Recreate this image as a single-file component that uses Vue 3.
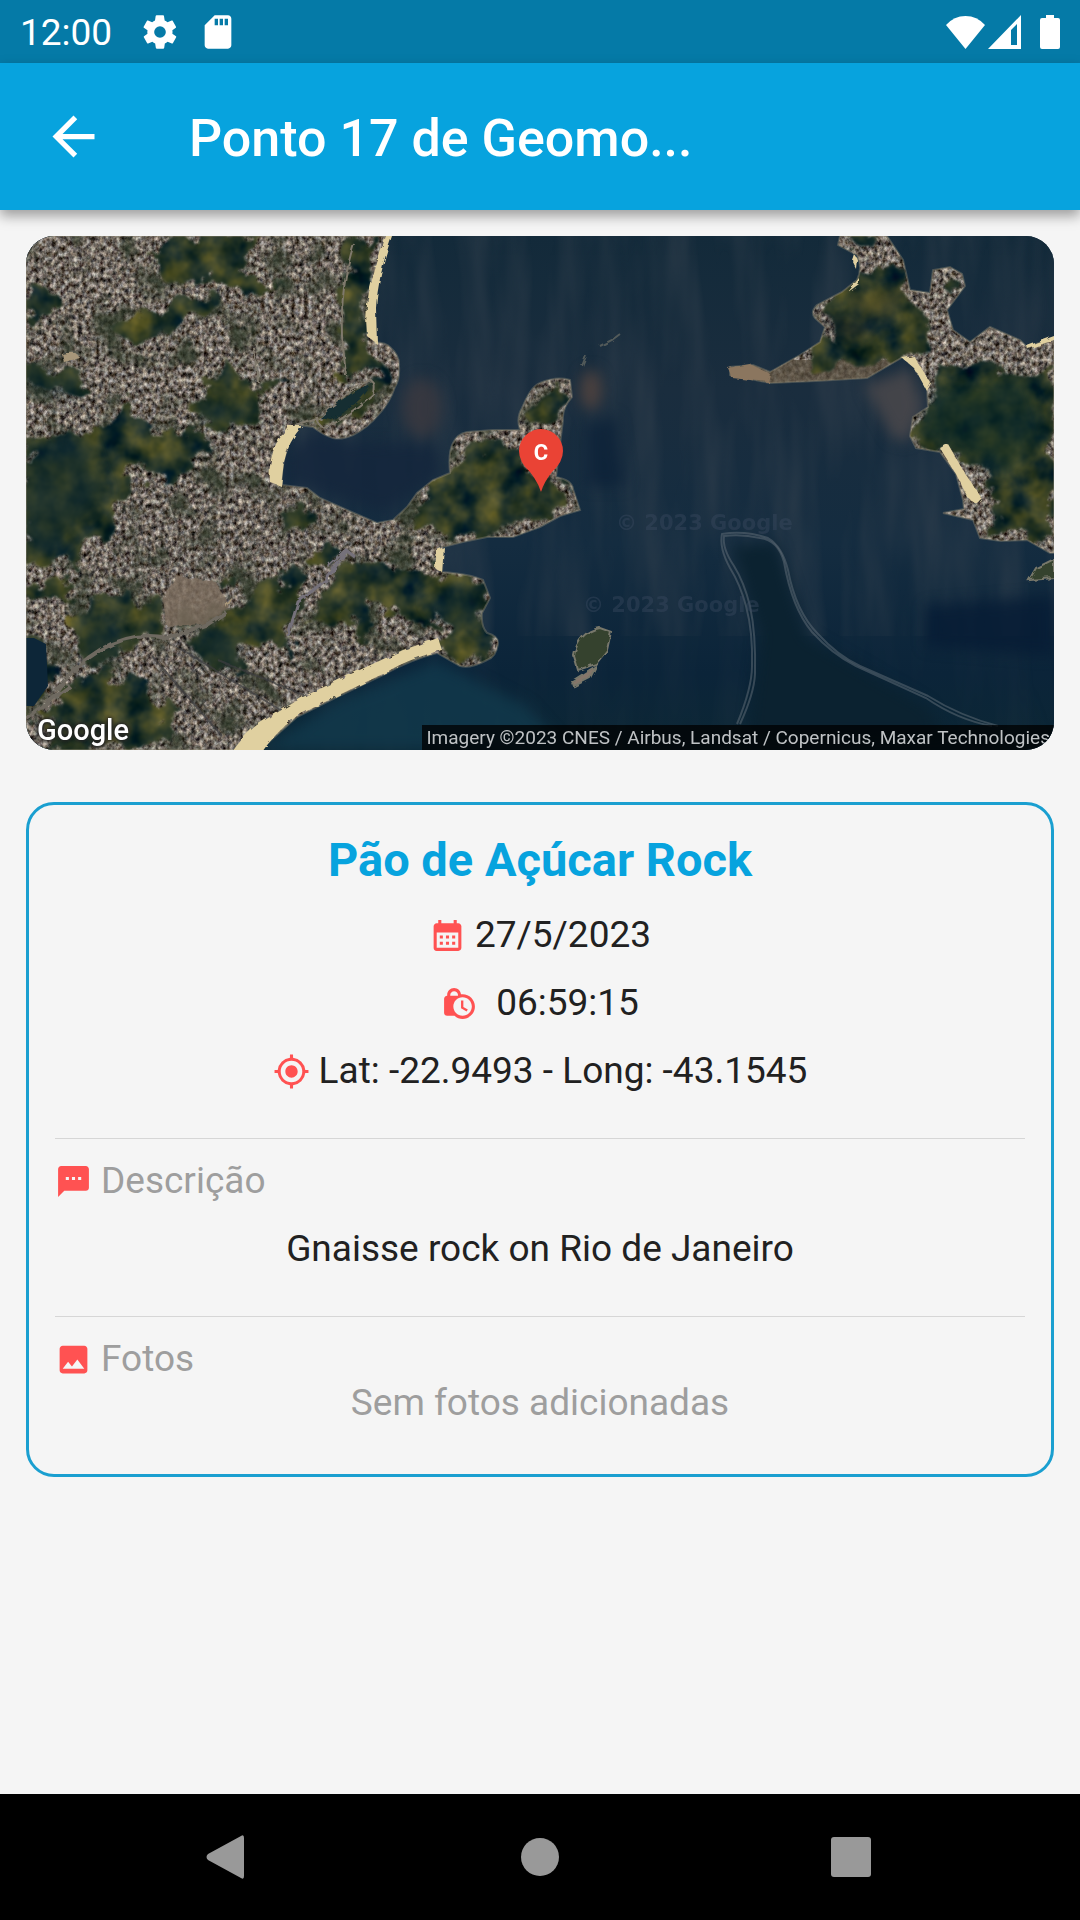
<script setup>
const point = {
  screenTitle: 'Ponto 17 de Geomo...',
  name: 'Pão de Açúcar Rock',
  date: '27/5/2023',
  time: '06:59:15',
  lat: '-22.9493',
  long: '-43.1545',
  description: 'Gnaisse rock on Rio de Janeiro',
}

const mainland =
  'M0 0H364Q356 22 352 37Q346 60 347 71L348 106Q361 107 364 111Q374 120 373 130Q374 143 369 151Q364 166 354 177Q342 192 327 199Q316 204 307 202Q297 199 287 191L272 189Q263 199 261 214Q255 230 256 249L281 252L294 262L321 274L351 287L367 284L381 271L391 257L407 244L424 237Q422 216 427 207Q431 198 441 196L467 194L494 194Q490 182 496 172Q505 150 514 147Q530 140 544 144L546 161Q536 172 537 184L530 241Q546 244 547 253L554 274L534 280L514 291L487 301L461 301L437 306L417 311L416 336Q444 338 457 344L464 362L456 377Q455 391 461 397Q473 400 472 408Q470 421 461 424Q444 433 434 430L411 417Q384 424 361 437L311 461L271 481L234 514H0Z'

const niteroi =
  'M814 0L812 9L831 19Q837 32 831 44L816 56L791 69Q784 76 789 82L799 91L794 106L774 119L744 136L727 129L704 131V139L744 147L790 145L841 142L877 121L893 130L901 151L902 171L887 181L884 200L890 212L914 216L930 238L937 264L938 273L917 277L947 284L954 302L975 305L1001 304L1024 317H1028V102L1001 111L994 104L964 91L944 106L927 94L921 74L939 50L936 38L924 31L907 34L904 57L884 54L877 24L861 0Z'

// wooded hills between the neighbourhoods
const hills = [
  'M128 8Q180 -8 242 0L212 28Q214 44 260 50Q220 60 190 44Q160 52 128 36Z',
  'M92 88Q140 66 182 62Q196 58 184 76L128 104Q100 112 82 96Z',
  'M318 0H350Q340 30 338 60L336 100L352 122Q360 140 350 160L322 186Q304 194 296 180Q340 160 346 138Q330 132 318 142L314 60Z',
  'M0 58Q20 48 36 60L18 84L0 90Z',
  'M0 128Q40 126 66 154L30 160L0 148Z',
  'M168 164Q190 142 202 120L216 138Q222 158 240 146L266 142L230 158Q240 182 214 190Q174 192 168 164Z',
  'M0 208Q34 194 60 198L102 158Q112 166 106 190Q134 206 162 190L182 196Q170 222 160 236L130 258Q120 232 110 222Q102 256 96 282L66 308L50 330L0 328Z',
  'M0 350L40 340Q54 348 44 360L0 360Z',
  'M58 370Q100 356 136 366L140 394Q110 408 90 424L64 430Q44 416 58 370Z',
  'M188 340L206 336L208 350L190 354Z',
  'M160 404Q184 392 198 374Q230 356 250 344L270 338Q288 360 266 392L258 420L244 404L220 412L214 434Q188 440 160 404Z',
  'M298 360L322 330Q370 324 414 336L452 346L460 362L452 376Q454 396 466 404Q468 416 456 422L414 414L424 394Q412 384 390 382L340 366L336 402L318 376L286 382Z',
  'M252 278Q278 270 288 274L276 292L262 302Q252 290 252 278Z',
  'M284 316Q302 306 310 314L302 330L288 326Z',
  'M0 404Q18 404 22 424L20 456Q10 480 0 484Z',
  'M44 450Q80 424 90 440Q132 454 152 476Q150 500 130 514H20Q34 490 20 476Z',
  'M384 274Q400 248 430 240Q450 200 470 206Q490 210 496 230L540 250L548 272L512 286L460 298L430 302Q410 298 396 288Z',
  'M500 172Q508 152 536 148L540 160Q530 172 530 182L506 186Z',
]

const eastHills = [
  'M822 50Q836 34 846 26L872 34L880 58L902 82Q910 100 890 116L850 130L790 134Q776 124 800 104L802 88L794 76Z',
  'M906 132Q950 120 990 136Q1020 138 1028 130V300L1000 296L960 296L962 282L975 262L952 240L936 214L892 204L896 184L908 172Z',
  'M818 0H850L842 16L824 12Z',
  'M914 44L930 40L932 52L920 66Z',
]
</script>

<template>
  <div class="screen">
    <div class="status-bar">
      <span class="clock">12:00</span>
      <svg class="status-icon" viewBox="0 0 24 24" aria-hidden="true">
        <path
          d="M19.4 13c.1-.3.1-.6.1-1s0-.7-.1-1l2.100-1.600c.2-.2.2-.4.100-.6l-2-3.500c-.1-.2-.4-.3-.6-.2l-2.500 1c-.5-.4-1.100-.7-1.700-1l-.4-2.600c0-.3-.2-.5-.5-.5h-4c-.2 0-.4.2-.5.4l-.4 2.700c-.6.2-1.100.600-1.700 1l-2.500-1c-.2-.1-.5 0-.6.2l-2 3.500c-.1.2-.1.500.1.600L4.500 11c0 .3-.1.600-.1 1s0 .7.100 1l-2.100 1.600c-.2.2-.2.4-.100.600l2 3.500c.1.2.4.3.6.2l2.500-1c.5.4 1.100.7 1.700 1l.4 2.600c0 .3.200.500.500.500h4c.2 0 .5-.2.500-.4l.4-2.700c.6-.2 1.100-.6 1.700-1l2.500 1c.2.1.500 0 .6-.2l2-3.500c.1-.2.100-.5-.1-.6zM12 15.500a3.500 3.500 0 1 1 0-7 3.500 3.500 0 0 1 0 7z"
        />
      </svg>
      <svg class="status-icon" viewBox="0 0 24 24" aria-hidden="true">
        <path
          d="M18 2h-8L4 8v12c0 1.100.9 2 2 2h12c1.100 0 2-.9 2-2V4c0-1.100-.9-2-2-2zm-6 6h-2V4h2v4zm3 0h-2V4h2v4zm3 0h-2V4h2v4z"
        />
      </svg>
      <div class="status-right">
        <svg class="wifi" viewBox="0 0 39 34" aria-hidden="true">
          <path d="M0 10Q8 1 19.500 1T39 10L19.500 34Z" />
        </svg>
        <svg class="signal" viewBox="0 0 33 34" aria-hidden="true">
          <path d="M33 0V34H0ZM29 9L23 15V30H29Z" fill-rule="evenodd" />
        </svg>
        <svg class="battery" viewBox="0 0 20 34" aria-hidden="true">
          <path d="M6 0h8v3h4q2 0 2 2v27q0 2-2 2H2q-2 0-2-2V5q0-2 2-2h4z" />
        </svg>
      </div>
    </div>

    <header class="app-bar">
      <button class="back-btn" type="button" aria-label="Voltar">
        <svg viewBox="0 0 24 24" aria-hidden="true">
          <path
            d="M20 11H7.830l5.590-5.590L12 4l-8 8 8 8 1.410-1.410L7.830 13H20v-2z"
          />
        </svg>
      </button>
      <h1>{{ point.screenTitle }}</h1>
    </header>

    <main class="content">
      <div class="map">
        <svg
          class="map-image"
          viewBox="0 0 1028 514"
          preserveAspectRatio="xMidYMid slice"
          aria-hidden="true"
        >
          <defs>
            <linearGradient id="sea" x1="0" y1="0" x2="0" y2="1">
              <stop offset="0" stop-color="#132a3a" />
              <stop offset="0.3" stop-color="#1a2d3e" />
              <stop offset="0.6" stop-color="#142c40" />
              <stop offset="0.85" stop-color="#0b2439" />
              <stop offset="1" stop-color="#0c2735" />
            </linearGradient>
            <clipPath id="land-clip"><path :d="mainland" /></clipPath>
            <clipPath id="east-clip"><path :d="niteroi" /></clipPath>
            <filter
              id="streaks"
              x="0"
              y="0"
              width="100%"
              height="100%"
              color-interpolation-filters="sRGB"
            >
              <feTurbulence
                type="fractalNoise"
                baseFrequency="0.03 0.005"
                numOctaves="3"
                seed="6"
              />
              <feColorMatrix
                values="0 0 0 0 0.21  0 0 0 0 0.26  0 0 0 0 0.31  1.6 0 0 0 -0.6"
              />
            </filter>
            <filter
              id="blocks"
              x="0"
              y="0"
              width="100%"
              height="100%"
              color-interpolation-filters="sRGB"
            >
              <feTurbulence
                type="fractalNoise"
                baseFrequency="0.23 0.19"
                numOctaves="3"
                seed="11"
              />
              <feColorMatrix
                values="1.1 0.15 0 0 -0.19  1.1 0.05 0 0 -0.17  1.05 0 0.1 0 -0.2  0 0 0 0 1"
              />
            </filter>
            <!-- trees and shadow scattered through the city -->
            <filter
              id="scatter"
              x="0"
              y="0"
              width="100%"
              height="100%"
              color-interpolation-filters="sRGB"
            >
              <feTurbulence
                type="fractalNoise"
                baseFrequency="0.03"
                numOctaves="5"
                seed="21"
              />
              <feColorMatrix
                values="0 0 0 0 0.17  0 0 0 0 0.21  0 0 0 0 0.15  4 0 0 0 -2"
              />
            </filter>
            <filter
              id="woods"
              x="-10%"
              y="-10%"
              width="120%"
              height="120%"
              color-interpolation-filters="sRGB"
            >
              <feTurbulence
                type="fractalNoise"
                baseFrequency="0.04"
                numOctaves="5"
                seed="4"
                result="noise"
              />
              <feDisplacementMap
                in="SourceGraphic"
                in2="noise"
                scale="40"
                xChannelSelector="R"
                yChannelSelector="G"
                result="shape"
              />
              <feColorMatrix
                in="noise"
                values="0.65 0.1 0 0 -0.2  0.45 0.1 0 0 -0.05  0.05 0.15 0 0 0.05  0 0 0 0 1"
              />
              <feComposite in2="shape" operator="in" />
              <feGaussianBlur stdDeviation="0.8" />
            </filter>
            <filter id="rough" x="-10%" y="-10%" width="120%" height="120%">
              <feTurbulence
                type="fractalNoise"
                baseFrequency="0.12"
                numOctaves="2"
                result="noise"
              />
              <feDisplacementMap in="SourceGraphic" in2="noise" scale="5" />
              <feGaussianBlur stdDeviation="0.7" />
            </filter>
            <filter
              id="soft"
              x="-20%"
              y="-20%"
              width="140%"
              height="140%"
              color-interpolation-filters="sRGB"
            >
              <feGaussianBlur stdDeviation="7" />
            </filter>
            <pattern
              id="streets"
              width="9"
              height="15"
              patternUnits="userSpaceOnUse"
              patternTransform="rotate(-18)"
            >
              <path class="street" d="M0 0V15M0 0H9" />
            </pattern>
            <pattern
              id="coast-streets"
              width="11"
              height="18"
              patternUnits="userSpaceOnUse"
              patternTransform="rotate(-36)"
            >
              <path class="street" d="M0 0V18M0 0H11" />
            </pattern>
          </defs>

          <rect width="1028" height="514" fill="url(#sea)" />
          <rect width="1028" height="400" filter="url(#streaks)" opacity="0.7" />
          <rect y="400" width="1028" height="114" filter="url(#streaks)" opacity="0.2" />
          <g filter="url(#soft)">
            <ellipse cx="396" cy="172" rx="20" ry="30" fill="#3c3a40" opacity="0.8" />
            <ellipse cx="565" cy="154" rx="11" ry="20" fill="#4b413f" />
            <path d="M838 150L884 132L898 170L882 206L866 202Z" fill="#4d4a4c" opacity="0.8" />
            <path d="M234 514L311 465L411 425L500 470L540 514Z" fill="#123a4c" opacity="0.8" />
            <path d="M262 220L285 196L320 206L410 210L415 238L360 276L262 246Z" fill="#14263c" opacity="0.8" />
            <path d="M900 370L1028 360V420L900 410Z" fill="#061c34" opacity="0.8" />
            <path d="M560 190L590 180L600 250L560 250Z" fill="#0c2238" opacity="0.8" />
            <path d="M706 310L750 306L780 400L900 470L920 500H722L734 400Z" fill="#0b2230" />
          </g>

          <g clip-path="url(#land-clip)">
            <rect width="560" height="514" filter="url(#blocks)" />
            <rect
              x="80"
              y="245"
              width="270"
              height="125"
              fill="url(#streets)"
            />
            <path
              d="M120 400L250 450L330 370L420 400L240 514H180Z"
              fill="url(#coast-streets)"
            />
            <rect width="560" height="514" filter="url(#scatter)" opacity="0.75" />
            <path
              d="M136 364L150 340L190 346L204 372L184 388L140 390Z"
              fill="#7d6e5f"
              opacity="0.8"
              filter="url(#rough)"
            />
            <g filter="url(#woods)">
              <path v-for="(d, i) in hills" :key="`hill-${i}`" :d="d" />
            </g>
            <g filter="url(#soft)" fill="#122a2c" opacity="0.6">
              <path d="M0 130L60 150L40 162L0 150Z" />
              <path d="M172 166L220 172L228 184L180 190Z" />
              <path d="M0 220L60 200L80 260L20 320L0 310Z" />
              <path d="M160 404L210 390L214 430L180 430Z" />
              <path d="M60 380L100 400L84 424L56 424Z" />
              <path d="M400 364L450 350L454 390L420 384Z" />
            </g>
            <path d="M8 402L20 408L22 450L8 470H0V402Z" fill="#0d2638" />
            <g filter="url(#rough)" fill="none">
              <path
                d="M328 8Q314 50 316 100L320 140M294 184Q308 164 340 146Q350 140 347 158Q322 180 304 190Q294 196 290 180M228 112L232 146M300 180L270 190"
                stroke="#7f796c"
                stroke-width="2"
              />
              <path d="M294 182Q320 158 342 149Q346 158 306 184Z" fill="#132d32" />
              <path
                d="M126 420L196 500M150 410L264 480M192 424L280 460"
                stroke="#3c3c3e"
                stroke-width="2"
                opacity="0.7"
              />
              <path
                d="M30 455Q80 390 142 402L182 388L200 376M0 482L44 450"
                stroke="#6e6960"
                stroke-width="4"
              />
              <path
                d="M262 400L272 366L300 344L320 316M302 330L320 314L330 322"
                stroke="#75717a"
                stroke-width="3"
              />
              <path
                d="M36 118Q50 114 54 122L38 126ZM200 372L206 360L200 366Z"
                fill="#a8977a"
              />
            </g>
          </g>
          <path :d="mainland" class="shore" />

          <g class="beaches" filter="url(#rough)">
            <path d="M360 0H366Q352 40 350 72L351 108L341 100Q338 70 346 44Q354 16 360 0Z" />
            <path d="M262 190L276 190Q262 206 258 226L255 250L244 246Q242 226 250 208Z" />
            <path d="M412 402L416 414Q380 424 361 436L311 460L271 480Q250 496 236 516H206Q222 494 234 487L277 461L327 437L377 414Z" />
            <path d="M411 314L418 311L416 336L409 332Z" />
          </g>

          <g clip-path="url(#east-clip)">
            <rect x="690" width="338" height="330" filter="url(#blocks)" />
            <path
              d="M700 124H890L880 150H700Z"
              fill="#574d3f"
              opacity="0.75"
            />
            <g filter="url(#woods)">
              <path v-for="(d, i) in eastHills" :key="`east-${i}`" :d="d" />
            </g>
            <g filter="url(#soft)" opacity="0.6">
              <path d="M824 62L880 50L866 84L830 78Z" fill="#5a5329" />
              <path d="M800 80L850 90L830 104L800 94Z" fill="#161f21" />
              <path
                d="M910 150L1000 140L1020 200L980 240L940 220L890 200Z"
                fill="#0d2926"
              />
            </g>
          </g>
          <path :d="niteroi" class="shore" />
          <g class="beaches" filter="url(#rough)">
            <path d="M876 122L888 120L904 146L900 154L888 132Z" />
            <path d="M914 212L922 208L938 236L956 262L950 268L942 262L930 238Z" />
            <path d="M828 18L832 24L831 34L826 24ZM833 42L833 48L822 56Z" />
            <path d="M1001 110L1028 100V104L1002 113Z" />
          </g>
          <path
            d="M702 132L724 128L744 138L742 146L706 142Z"
            fill="#8b765f"
            filter="url(#rough)"
          />

          <g class="islet" filter="url(#rough)">
            <path d="M552 434L548 420Q552 396 574 392L585 396L581 414L570 428Z" />
            <path d="M546 445L570 430L564 442L548 450Z" fill="#85766a" />
            <path d="M1003 344L1010 332L1028 323V342Z" />
            <path
              d="M556 130L560 120M574 110L586 104L594 98"
              fill="none"
              opacity="0.6"
            />
          </g>

          <path
            class="wake"
            d="M714 488Q728 458 729 438Q730 398 724 370Q718 346 708 330Q696 312 698 300Q716 298 734 302Q752 304 758 326Q766 372 786 396Q806 418 830 430L900 462Q932 484 966 490"
          />
          <path
            class="wake"
            d="M711 488Q726 452 726 430Q727 396 720 370Q714 348 704 332Q693 312 696 298Q718 294 742 302Q756 310 762 334Q770 376 792 398Q812 420 834 430L902 460Q934 480 972 490"
          />

          <g class="watermark">
            <text x="590" y="294">© 2023 Google</text>
            <text x="557" y="376">© 2023 Google</text>
          </g>

          <path
            d="M515 256Q512 246 504 236Q493 226 493 215A22 22 0 0 1 537 215Q537 226 526 236Q518 246 515 256Z"
            fill="#ea4335"
          />
          <text class="pin-label" x="515" y="224">C</text>
        </svg>
        <span class="map-logo">Google</span>
        <span class="map-credit"
          >Imagery ©2023 CNES / Airbus, Landsat / Copernicus, Maxar
          Technologies</span
        >
      </div>

      <section class="card">
        <h2>{{ point.name }}</h2>
        <div class="rows">
          <p class="row">
            <svg class="icon" viewBox="0 0 24 24" aria-hidden="true">
              <path
                d="M19 4h-1V2h-2v2H8V2H6v2H5c-1.110 0-1.990.9-1.990 2L3 20a2 2 0 0 0 2 2h14c1.100 0 2-.9 2-2V6c0-1.100-.9-2-2-2zm0 16H5V10h14v10zM9 14H7v-2h2v2zm4 0h-2v-2h2v2zm4 0h-2v-2h2v2zm-8 4H7v-2h2v2zm4 0h-2v-2h2v2zm4 0h-2v-2h2v2z"
              />
            </svg>
            <span>{{ point.date }}</span>
          </p>
          <p class="row wide-gap">
            <svg class="icon" viewBox="0 0 24 24" aria-hidden="true">
              <path
                d="M14.500 14.200l2.900 1.700-.8 1.300L13 15v-5h1.500v4.200zM22 14c0 4.410-3.590 8-8 8-2.020 0-3.860-.76-5.270-2H4c-1.150 0-2-.85-2-2V9c0-1.120.89-1.960 2-2v-.5C4 4.010 6.010 2 8.500 2c2.340 0 4.240 1.790 4.460 4.080.34-.05.69-.08 1.040-.08 4.410 0 8 3.590 8 8zM6 7h5v-.74C10.880 4.990 9.800 4 8.500 4 7.120 4 6 5.120 6 6.500V7zm14 7c0-3.310-2.690-6-6-6s-6 2.690-6 6 2.690 6 6 6 6-2.690 6-6z"
              />
            </svg>
            <span>{{ point.time }}</span>
          </p>
          <p class="row">
            <svg class="icon" viewBox="0 0 24 24" aria-hidden="true">
              <path
                d="M12 8c-2.210 0-4 1.790-4 4s1.790 4 4 4 4-1.790 4-4-1.790-4-4-4zm8.940 3A8.994 8.994 0 0 0 13 3.060V1h-2v2.060A8.994 8.994 0 0 0 3.060 11H1v2h2.060A8.994 8.994 0 0 0 11 20.940V23h2v-2.060A8.994 8.994 0 0 0 20.940 13H23v-2h-2.060zM12 19c-3.870 0-7-3.130-7-7s3.130-7 7-7 7 3.130 7 7-3.130 7-7 7z"
              />
            </svg>
            <span>Lat: {{ point.lat }} - Long: {{ point.long }}</span>
          </p>
        </div>

        <hr />

        <div class="rows">
          <h3 class="row label">
            <svg class="icon" viewBox="0 0 24 24" aria-hidden="true">
              <path
                d="M20 2H4c-1.100 0-1.990.9-1.990 2L2 22l4-4h14c1.100 0 2-.9 2-2V4c0-1.100-.9-2-2-2zM9 11H7V9h2v2zm4 0h-2V9h2v2zm4 0h-2V9h2v2z"
              />
            </svg>
            <span>Descrição</span>
          </h3>
          <p class="row">{{ point.description }}</p>
        </div>

        <hr />

        <h3 class="row label">
          <svg class="icon" viewBox="0 0 24 24" aria-hidden="true">
            <path
              d="M21 19V5c0-1.100-.9-2-2-2H5c-1.100 0-2 .9-2 2v14c0 1.100.9 2 2 2h14c1.100 0 2-.9 2-2zM8.500 13.500l2.500 3.010L14.500 12l4.500 6H5l3.500-4.500z"
            />
          </svg>
          <span>Fotos</span>
        </h3>
        <p class="row muted">Sem fotos adicionadas</p>
      </section>
    </main>

    <nav class="nav-bar" aria-label="Sistema">
      <button type="button" aria-label="Voltar">
        <svg viewBox="0 0 44 44" aria-hidden="true">
          <path d="M35 1Q38 -1 38 3V41Q38 45 35 43L2 25Q-1 22 2 19Z" />
        </svg>
      </button>
      <button type="button" aria-label="Início">
        <svg viewBox="0 0 44 44" aria-hidden="true">
          <circle cx="22" cy="22" r="19" />
        </svg>
      </button>
      <button type="button" aria-label="Recentes">
        <svg viewBox="0 0 44 44" aria-hidden="true">
          <rect x="1" y="2" width="40" height="40" rx="3" />
        </svg>
      </button>
    </nav>
  </div>
</template>

<style>
body {
  margin: 0;
  background: #f5f5f5;
}
</style>

<style scoped>
.screen {
  display: flex;
  flex-direction: column;
  min-height: 100vh;
  background: #f5f5f5;
  color: #212121;
  font-family: Roboto, 'Liberation Sans', sans-serif;
}

h1,
h2,
h3,
p {
  margin: 0;
}

button {
  padding: 0;
  border: 0;
  background: none;
  cursor: pointer;
}

svg {
  display: block;
}

.status-bar {
  display: flex;
  align-items: center;
  gap: 8px;
  height: 63px;
  padding: 0 20px;
  box-sizing: border-box;
  background: #057aa7;
  color: #fff;
}

.status-bar svg {
  fill: #fff;
}

.clock {
  margin-right: 20px;
  padding-top: 2px;
  font-size: 37px;
  line-height: 44px;
}

.status-icon {
  width: 40px;
  height: 40px;
  margin-right: 10px;
}

.status-right {
  display: flex;
  align-items: center;
  margin-left: auto;
}

.wifi {
  width: 39px;
  height: 34px;
}

.signal {
  width: 33px;
  height: 34px;
  margin-left: 3px;
}

.battery {
  width: 20px;
  height: 34px;
  margin-left: 19px;
}

.app-bar {
  display: flex;
  align-items: center;
  gap: 84px;
  height: 147px;
  padding: 0 42px;
  box-sizing: border-box;
  background: #07a3de;
  color: #fff;
  box-shadow: 0 6px 12px rgba(0, 0, 0, 0.36);
}

.back-btn svg {
  width: 63px;
  height: 63px;
  fill: #fff;
}

.app-bar h1 {
  padding-top: 4px;
  font-size: 52px;
  font-weight: 500;
  line-height: 60px;
  white-space: nowrap;
}

.content {
  display: flex;
  flex-direction: column;
  flex: 1;
  gap: 52px;
  padding: 26px;
}

.map {
  position: relative;
  aspect-ratio: 2 / 1;
  border-radius: 28px;
  overflow: hidden;
  background: #132a3a;
}

.map-image {
  width: 100%;
  height: 100%;
}

.street {
  fill: none;
  stroke: #38383a;
  stroke-width: 2;
  opacity: 0.35;
}

.shore {
  fill: none;
  stroke: #8b8874;
  stroke-width: 2;
  opacity: 0.4;
}

.beaches {
  fill: #e0d0a0;
}

.islet {
  fill: #35422f;
  stroke: #77776a;
  stroke-width: 2;
}

.wake {
  fill: none;
  stroke: #63707a;
  stroke-width: 2;
  opacity: 0.5;
}

.watermark {
  fill: #3d4c62;
  opacity: 0.4;
  font-family: 'DejaVu Sans', sans-serif;
  font-size: 21px;
  font-weight: bold;
}

.pin-label {
  fill: #fff;
  font-size: 22px;
  font-weight: 700;
  text-anchor: middle;
}

.map-logo {
  position: absolute;
  left: 11px;
  bottom: 4px;
  color: #fff;
  font-size: 29px;
  font-weight: 500;
  line-height: 32px;
  text-shadow:
    0 0 3px #222,
    0 0 4px #222,
    0 0 5px #222;
}

.map-credit {
  position: absolute;
  right: 0;
  bottom: 0;
  padding: 0 4px;
  background: rgba(0, 0, 0, 0.75);
  color: #bfc2c4;
  font-family: Roboto, 'Liberation Sans', sans-serif;
  font-size: 19px;
  line-height: 25px;
  white-space: nowrap;
}

.card {
  padding: 27px 26px 49px;
  border: 3px solid #1a9fd0;
  border-radius: 28px;
}

.card h2 {
  margin-bottom: 25px;
  color: #07a3de;
  font-size: 47px;
  font-weight: 700;
  line-height: 56px;
  text-align: center;
}

.rows {
  display: flex;
  flex-direction: column;
  gap: 24px;
}

.row {
  display: flex;
  align-items: center;
  justify-content: center;
  gap: 9px;
  font-size: 37px;
  font-weight: 400;
  line-height: 44px;
}

.row.wide-gap {
  gap: 18px;
}

.row.label {
  justify-content: flex-start;
}

.label,
.muted {
  color: #9e9e9e;
}

.icon {
  flex: none;
  width: 37px;
  height: 37px;
  fill: #ff5252;
}

hr {
  height: 1px;
  margin: 45px 0 20px;
  border: 0;
  background: #d6d6d6;
}

.nav-bar {
  display: grid;
  grid-template-columns: repeat(3, 1fr);
  place-items: center;
  height: 126px;
  padding: 0 72px;
  box-sizing: border-box;
  background: #000;
}

.nav-bar svg {
  width: 44px;
  height: 44px;
  fill: #999;
}
</style>
